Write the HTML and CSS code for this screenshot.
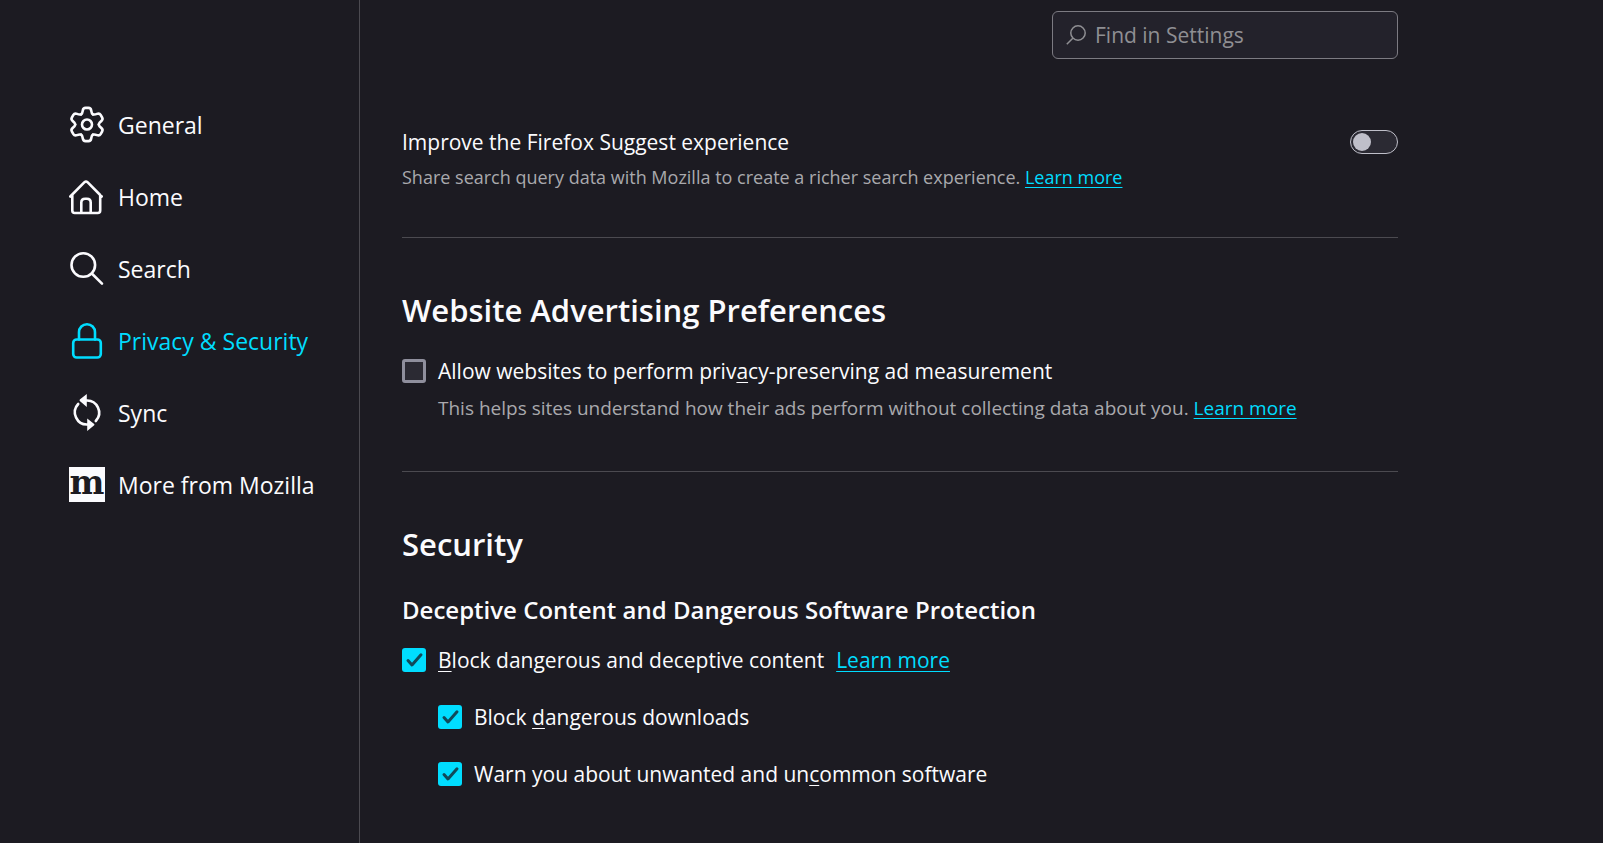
FILE: index.html
```html
<!DOCTYPE html>
<html lang="en">
<head>
<meta charset="utf-8">
<meta name="viewport" content="width=device-width, initial-scale=1">
<title>Settings</title>
<link rel="stylesheet" href="styles.css">
</head>
<body>
<div class="page">
  <nav class="sidebar" aria-label="Settings categories">
    <a class="category" href="#general">
      <svg class="category-icon" viewBox="0 0 36 36" aria-hidden="true">
        <defs><path id="tooth" d="M-5.900-10.200C-4.600-11-4.400-12.500-4.200-14C-3.900-16-3-16.600-1.500-16.600H1.500C3-16.600 3.900-16 4.200-14C4.400-12.500 4.600-11 5.900-10.200"/></defs>
        <g transform="translate(18 17.500)">
          <use href="#tooth"/><use href="#tooth" transform="rotate(60)"/><use href="#tooth" transform="rotate(120)"/>
          <use href="#tooth" transform="rotate(180)"/><use href="#tooth" transform="rotate(240)"/><use href="#tooth" transform="rotate(300)"/>
          <circle r="5"/>
        </g>
      </svg>
      <span>General</span>
    </a>
    <a class="category" href="#home">
      <svg class="category-icon" viewBox="0 0 36 36" aria-hidden="true">
        <path d="M1.300 17.500L15.500 3.200Q17 1.800 18.500 3.200L32.700 17.500M3.300 16V31.500Q3.300 34 5.800 34H28.700Q31.200 34 31.200 31.500V16M12.300 34V23.500Q12.300 19.700 16.100 19.700H17.900Q21.700 19.700 21.700 23.500V34"/>
      </svg>
      <span>Home</span>
    </a>
    <a class="category" href="#search">
      <svg class="category-icon" viewBox="0 0 36 36" aria-hidden="true">
        <circle cx="14.300" cy="14" r="11.800"/><path d="M22.800 22.500L33 32.700"/>
      </svg>
      <span>Search</span>
    </a>
    <a class="category selected" href="#privacy" aria-current="page">
      <svg class="category-icon" viewBox="0 0 36 36" aria-hidden="true">
        <rect x="4.200" y="16.500" width="27.600" height="18" rx="3.500"/><path d="M10 16.500V9.200A8 8 0 0 1 26 9.200V16.500"/>
      </svg>
      <span>Privacy &amp; Security</span>
    </a>
    <a class="category" href="#sync">
      <svg class="category-icon" viewBox="0 0 36 36" aria-hidden="true">
        <path d="M17 5.500A12.200 12.200 0 0 1 26.800 26M9.200 9A12.200 12.200 0 0 0 19 29.500"/>
        <path class="solid" d="M17.800-1V12L10.800 6Q10.300 5.300 10.800 4.600ZM18.200 36V23.500L25.200 28.900Q25.700 29.500 25.200 30.200Z"/>
      </svg>
      <span>Sync</span>
    </a>
    <a class="category" href="#more">
      <svg class="category-icon" viewBox="0 0 36 36" aria-hidden="true">
        <rect class="solid" y="0" width="36" height="35"/>
        <text class="logo-letter" x="18" y="27" text-anchor="middle">m</text>
      </svg>
      <span>More from Mozilla</span>
    </a>
  </nav>

  <main class="content">
    <div class="search-row">
      <label class="search-box">
        <svg class="search-icon" viewBox="0 0 20 20" aria-hidden="true"><circle cx="12" cy="8" r="7.200"/><path d="M6.800 13.200L.8 19.200"/></svg>
        <input class="search-input" type="search" placeholder="Find in Settings" aria-label="Find in Settings">
      </label>
    </div>

    <section class="suggest">
      <div class="suggest-row">
        <label for="suggest">Improve the Firefox Suggest experience</label>
        <input class="toggle" type="checkbox" role="switch" id="suggest">
      </div>
      <p class="description">Share search query data with Mozilla to create a richer search experience. <a class="link" href="#suggest-info">Learn more</a></p>
    </section>

    <section class="advertising">
      <h1 class="title">Website Advertising Preferences</h1>
      <div class="option">
        <input class="check" type="checkbox" id="ads">
        <label for="ads">Allow websites to perform priv<u>a</u>cy-preserving ad measurement</label>
      </div>
      <p class="description indented">This helps sites understand how their ads perform without collecting data about you. <a class="link" href="#ads-info">Learn more</a></p>
    </section>

    <section class="security">
      <h1 class="title">Security</h1>
      <h2 class="subtitle">Deceptive Content and Dangerous Software Protection</h2>
      <div class="options">
        <div class="option">
          <input class="check" type="checkbox" id="block" checked>
          <label for="block"><u>B</u>lock dangerous and deceptive content</label>
          <a class="link" href="#block-info">Learn more</a>
        </div>
        <div class="option nested">
          <input class="check" type="checkbox" id="downloads" checked>
          <label for="downloads">Block <u>d</u>angerous downloads</label>
        </div>
        <div class="option nested">
          <input class="check" type="checkbox" id="uncommon" checked>
          <label for="uncommon">Warn you about unwanted and un<u>c</u>ommon software</label>
        </div>
      </div>
    </section>
  </main>
</div>
</body>
</html>
```
FILE: styles.css
```css
* {
  box-sizing: border-box;
}

body {
  margin: 0;
  background: #1c1b22;
  color: #fbfbfe;
  font: 21px/30px "Open Sans", "Noto Sans", sans-serif;
}

.page {
  display: flex;
  min-height: 100vh;
}

.sidebar {
  flex: none;
  width: 360px;
  padding: 89px 0 0 69px;
  border-right: 1px solid #4b4a50;
}

.category {
  display: flex;
  align-items: center;
  gap: 13px;
  height: 72px;
  color: inherit;
  font-size: 23px;
  text-decoration: none;
}

.category.selected {
  color: #00ddff;
}

.category-icon {
  flex: none;
  width: 36px;
  height: 36px;
  overflow: visible;
  fill: none;
  stroke: currentColor;
  stroke-width: 2.6;
  stroke-linecap: round;
  stroke-linejoin: round;
}

.solid {
  fill: currentColor;
  stroke: none;
}

.logo-letter {
  fill: #1c1b22;
  stroke: none;
  font: bold 33px "DejaVu Serif", serif;
}

.content {
  flex: 1;
  max-width: 1038px;
  padding: 11px 0 40px 42px;
}

.search-row {
  display: flex;
  justify-content: flex-end;
}

.search-box {
  display: flex;
  align-items: center;
  gap: 9px;
  width: 346px;
  height: 48px;
  padding: 0 13px;
  border: 1px solid #7c7b82;
  border-radius: 6px;
  background: #23222b;
}

.search-icon {
  flex: none;
  width: 20px;
  height: 20px;
  fill: none;
  stroke: #8f8f93;
  stroke-width: 1.5;
}

.search-input {
  flex: 1;
  min-width: 0;
  padding: 0;
  border: 0;
  outline: 0;
  background: none;
  color: inherit;
  font: inherit;
}

.search-input::placeholder {
  color: #8f8f93;
  opacity: 1;
}

.suggest {
  padding: 68px 0 46px;
}

.suggest-row {
  display: flex;
  align-items: center;
  justify-content: space-between;
}

.toggle {
  appearance: none;
  width: 48px;
  height: 24px;
  margin: 0;
  padding: 2px;
  border: 1px solid #bfbfc9;
  border-radius: 12px;
  background: #2b2a33;
}

.toggle::before {
  content: "";
  display: block;
  width: 18px;
  height: 18px;
  border-radius: 50%;
  background: #bfbfc9;
}

.toggle:checked::before {
  margin-left: auto;
}

.description {
  margin: 6px 0 0;
  color: #a9a9ad;
  font-size: 18px;
  line-height: 28px;
}

.description.indented {
  margin-top: 8px;
  padding-left: 36px;
  font-size: 19px;
}

.link {
  color: #00ddff;
  text-decoration-thickness: 1px;
  text-underline-offset: 3px;
}

.advertising,
.security {
  border-top: 1px solid #4b4a50;
}

.advertising {
  padding: 50px 0 49px;
}

.security {
  padding-top: 50px;
}

.title {
  margin: 0;
  font-size: 31px;
  font-weight: 600;
  line-height: 44px;
}

.subtitle {
  margin: 28px 0 19px;
  font-size: 24px;
  font-weight: 600;
  line-height: 32px;
}

.option {
  display: flex;
  align-items: center;
  gap: 12px;
}

.advertising .option {
  margin-top: 24px;
}

.options {
  display: grid;
  gap: 27px;
}

.nested {
  padding-left: 36px;
}

.option u {
  text-decoration-thickness: 1px;
  text-underline-offset: 3px;
}

.check {
  appearance: none;
  flex: none;
  width: 24px;
  height: 24px;
  margin: 0;
  border: 3px solid #8f8f9d;
  border-radius: 3px;
  background: #2b2a33;
}

.check:checked {
  border: 0;
  background: #00ddff url("data:image/svg+xml,%3Csvg xmlns='http://www.w3.org/2000/svg' viewBox='0 0 24 24'%3E%3Cpath d='M6 12.500L10 17L19 6.800' fill='none' stroke='%23104a5a' stroke-width='3' stroke-linecap='round' stroke-linejoin='round'/%3E%3C/svg%3E") center / 24px no-repeat;
}
```
